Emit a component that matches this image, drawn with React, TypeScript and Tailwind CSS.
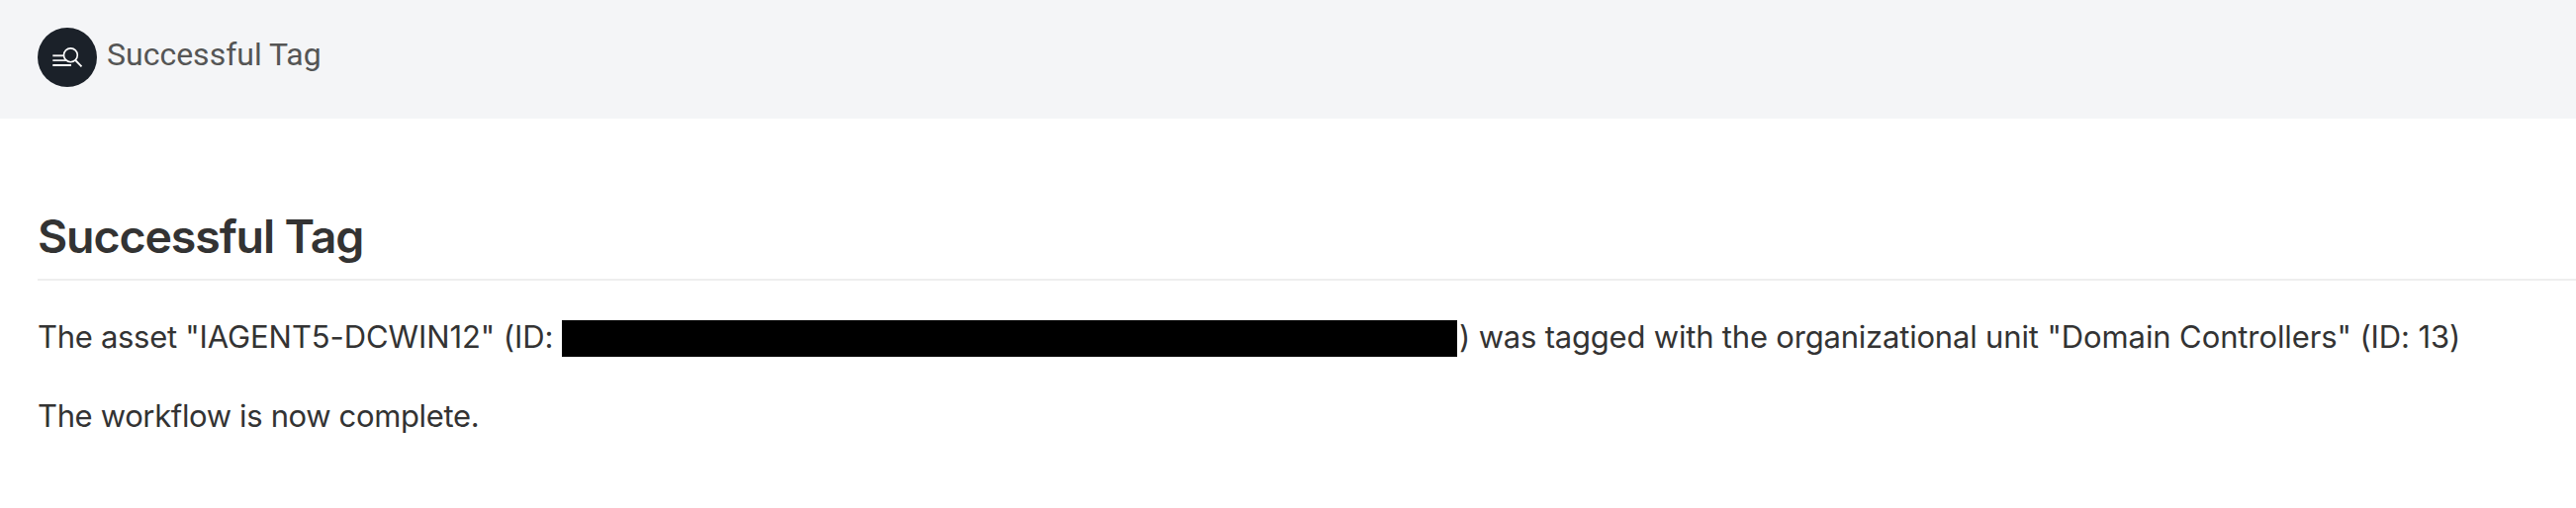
function SearchLogo() {
  return (
    <svg
      className="size-[60px] shrink-0"
      viewBox="0 0 60 60"
      fill="none"
      aria-hidden="true"
    >
      <circle cx="30" cy="30" r="30" fill="#1b2129" />
      <path d="M15.3 28.3H27" stroke="#f4f4f4" strokeWidth="1.9" />
      <path d="M15.3 33.1H29.5" stroke="#f4f4f4" strokeWidth="1.7" />
      <path d="M15.3 38H34" stroke="#fff" strokeWidth="2" />
      <circle cx="33.4" cy="27.8" r="6.9" stroke="#fff" strokeWidth="1.6" />
      <path d="M38.3 33L44.5 39.3" stroke="#fff" strokeWidth="1.8" />
    </svg>
  );
}

export default function App() {
  return (
    <div className="flex h-[514px] w-full flex-col overflow-hidden bg-white font-['Inter',sans-serif] text-[#333333]">
      <header className="flex h-[120px] shrink-0 items-start bg-[#f4f5f7] pt-7 pl-[38px]">
        <SearchLogo />
        <span className="mt-2 ml-[10px] font-['Roboto',sans-serif] text-[32px] leading-[38px] whitespace-nowrap text-[#555555]">
          Successful Tag
        </span>
      </header>

      <main className="flex flex-col pt-[89px] pl-[38px]">
        <h1 className="h-[75px] border-b-2 border-[#eeeeee] text-[46.5px] leading-[60px] font-semibold tracking-[-1.12px] whitespace-nowrap">
          Successful Tag
        </h1>

        <p className="mt-[33px] flex text-[31px] leading-[48px] whitespace-pre">
          <span className="w-[530px] shrink-0">
            <span className="tracking-[-0.3px]">The asset </span>
            <span className="tracking-[-0.09px]">"IAGENT5-DCWIN12" (ID: </span>
          </span>
          <span className="mt-[7px] h-[37px] w-[905px] shrink-0 bg-black" />
          <span className="ml-0.5">
            <span className="tracking-[-0.2px]">
              ) was tagged with the organizational{" "}
            </span>
            <span className="tracking-[-0.11px]">
              unit "Domain Controllers" (ID: 13)
            </span>
          </span>
        </p>

        <p className="mt-8 text-[31px] leading-[48px] tracking-[-0.36px]">
          The workflow is now complete.
        </p>
      </main>
    </div>
  );
}
